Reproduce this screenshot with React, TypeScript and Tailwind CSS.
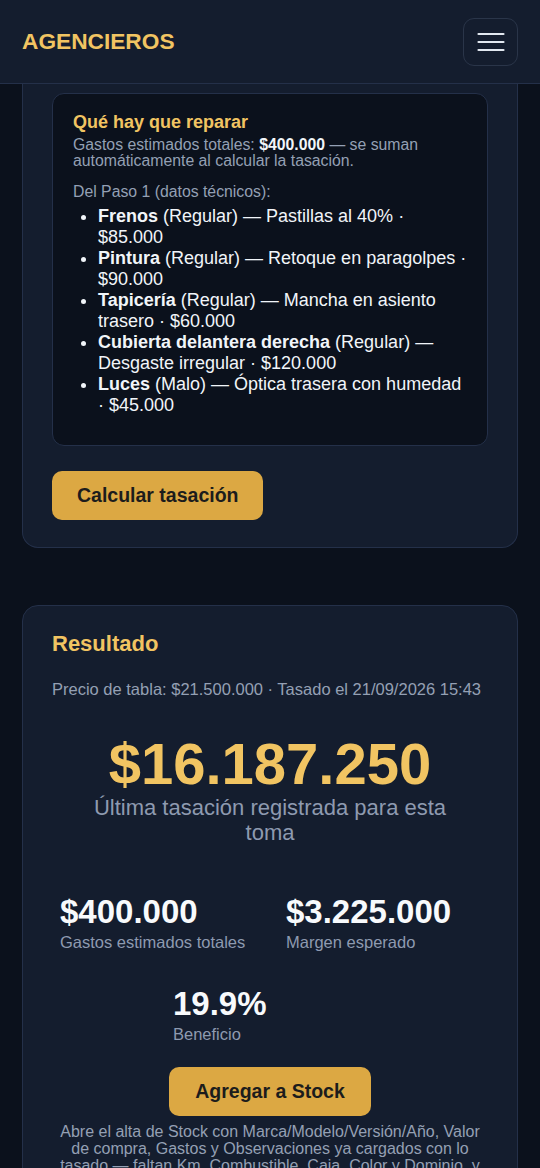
const repairs = [
  { part: "Frenos", state: "Regular", note: "Pastillas al 40%", cost: "$85.000" },
  { part: "Pintura", state: "Regular", note: "Retoque en paragolpes", cost: "$90.000" },
  { part: "Tapicería", state: "Regular", note: "Mancha en asiento trasero", cost: "$60.000" },
  { part: "Cubierta delantera derecha", state: "Regular", note: "Desgaste irregular", cost: "$120.000" },
  { part: "Luces", state: "Malo", note: "Óptica trasera con humedad", cost: "$45.000" },
];

const stats = [
  { value: "$400.000", label: "Gastos estimados totales" },
  { value: "$3.225.000", label: "Margen esperado" },
  { value: "19.9%", label: "Beneficio" },
];

function Header() {
  return (
    <header className="flex h-[84px] items-center justify-between border-b border-[#243049] bg-[#141d2e] pl-[22px] pr-[22px]">
      <span className="text-[22.7px] font-bold text-[#f1c462]">AGENCIEROS</span>
      <button className="flex h-[48px] w-[55px] items-center justify-center rounded-[11px] border border-[#2a3549] bg-[#141d2e] text-[#e2e8f0]">
        <svg width="28" height="20" viewBox="0 0 28 20" fill="none" stroke="currentColor" strokeWidth="2.2" strokeLinecap="round">
          <line x1="1.5" y1="2" x2="26.5" y2="2" />
          <line x1="1.5" y1="10" x2="26.5" y2="10" />
          <line x1="1.5" y1="18" x2="26.5" y2="18" />
        </svg>
      </button>
    </header>
  );
}

function RepairCard() {
  return (
    <section className="mx-[22px] rounded-b-[16px] border border-t-0 border-[#243049] bg-[#141d2e] px-[29px] pb-[27px] pt-[9px]">
      <div className="rounded-[12px] border border-[#243049] bg-[#0b111c] px-[20px] pb-[29px] pt-[17px]">
        <h3 className="text-[18px] font-bold leading-[22px] text-[#f1c462]">Qué hay que reparar</h3>
        <p className="mt-[4px] text-[15.8px] leading-[16px] text-[#94a0b4]">
          Gastos estimados totales: <strong className="text-[#f1f5f9]">$400.000</strong> — se suman
          automáticamente al calcular la tasación.
        </p>
        <p className="mt-[15px] text-[15.8px] leading-[16px] text-[#94a0b4]">Del Paso 1 (datos técnicos):</p>
        <ul className="mt-[6px] list-disc pl-[25px] text-[18px] leading-[21px] text-[#f1f5f9]">
          {repairs.map((r) => (
            <li key={r.part}>
              <strong>{r.part}</strong> ({r.state}) — {r.note} · {r.cost}
            </li>
          ))}
        </ul>
      </div>
      <button className="mt-[25px] h-[49px] rounded-[10px] bg-[#dca843] px-[25px] text-[19.5px] font-bold text-[#1c1c1c]">
        Calcular tasación
      </button>
    </section>
  );
}

function ResultCard() {
  return (
    <section className="mx-[22px] mt-[57px] rounded-[16px] border border-[#243049] bg-[#141d2e] px-[29px] pb-[40px] pt-[24px]">
      <h2 className="text-[22px] font-bold leading-[28px] text-[#f1c462]">Resultado</h2>
      <p className="mt-[21px] text-[16.5px] leading-[20px] text-[#94a0b4]">
        Precio de tabla: $21.500.000 · Tasado el 21/09/2026 15:43
      </p>
      <div className="mt-[36px] text-center">
        <div className="text-[58px] font-bold leading-[58px] text-[#f1c462]">$16.187.250</div>
        <p className="mx-auto mt-[2px] max-w-[380px] text-[22px] leading-[25px] text-[#8e9ab0]">
          Última tasación registrada para esta toma
        </p>
      </div>
      <div className="mt-[41px] flex flex-wrap justify-center gap-4">
        {stats.map((s) => (
          <div key={s.label} className="w-[210px] p-2">
            <div className="text-[33px] font-bold leading-[36px] text-[#f8fafc]">{s.value}</div>
            <div className="text-[16.5px] leading-[24px] text-[#8e9ab0]">{s.label}</div>
          </div>
        ))}
      </div>
      <div className="mt-[13px] flex justify-center">
        <button className="h-[49px] rounded-[10px] bg-[#dca843] px-[26px] text-[19.5px] font-bold text-[#1c1c1c]">
          Agregar a Stock
        </button>
      </div>
      <p className="mt-[7px] text-center text-[16px] leading-[17px] text-[#94a0b4]">
        Abre el alta de Stock con Marca/Modelo/Versión/Año, Valor de compra, Gastos y Observaciones ya cargados con lo
        tasado — faltan Km, Combustible, Caja, Color y Dominio, y las fotos del vehículo.
      </p>
    </section>
  );
}

export default function App() {
  return (
    <div className="min-h-screen bg-[#0b111c] pb-10 font-['Liberation_Sans',Arial,sans-serif]">
      <Header />
      <RepairCard />
      <ResultCard />
    </div>
  );
}
